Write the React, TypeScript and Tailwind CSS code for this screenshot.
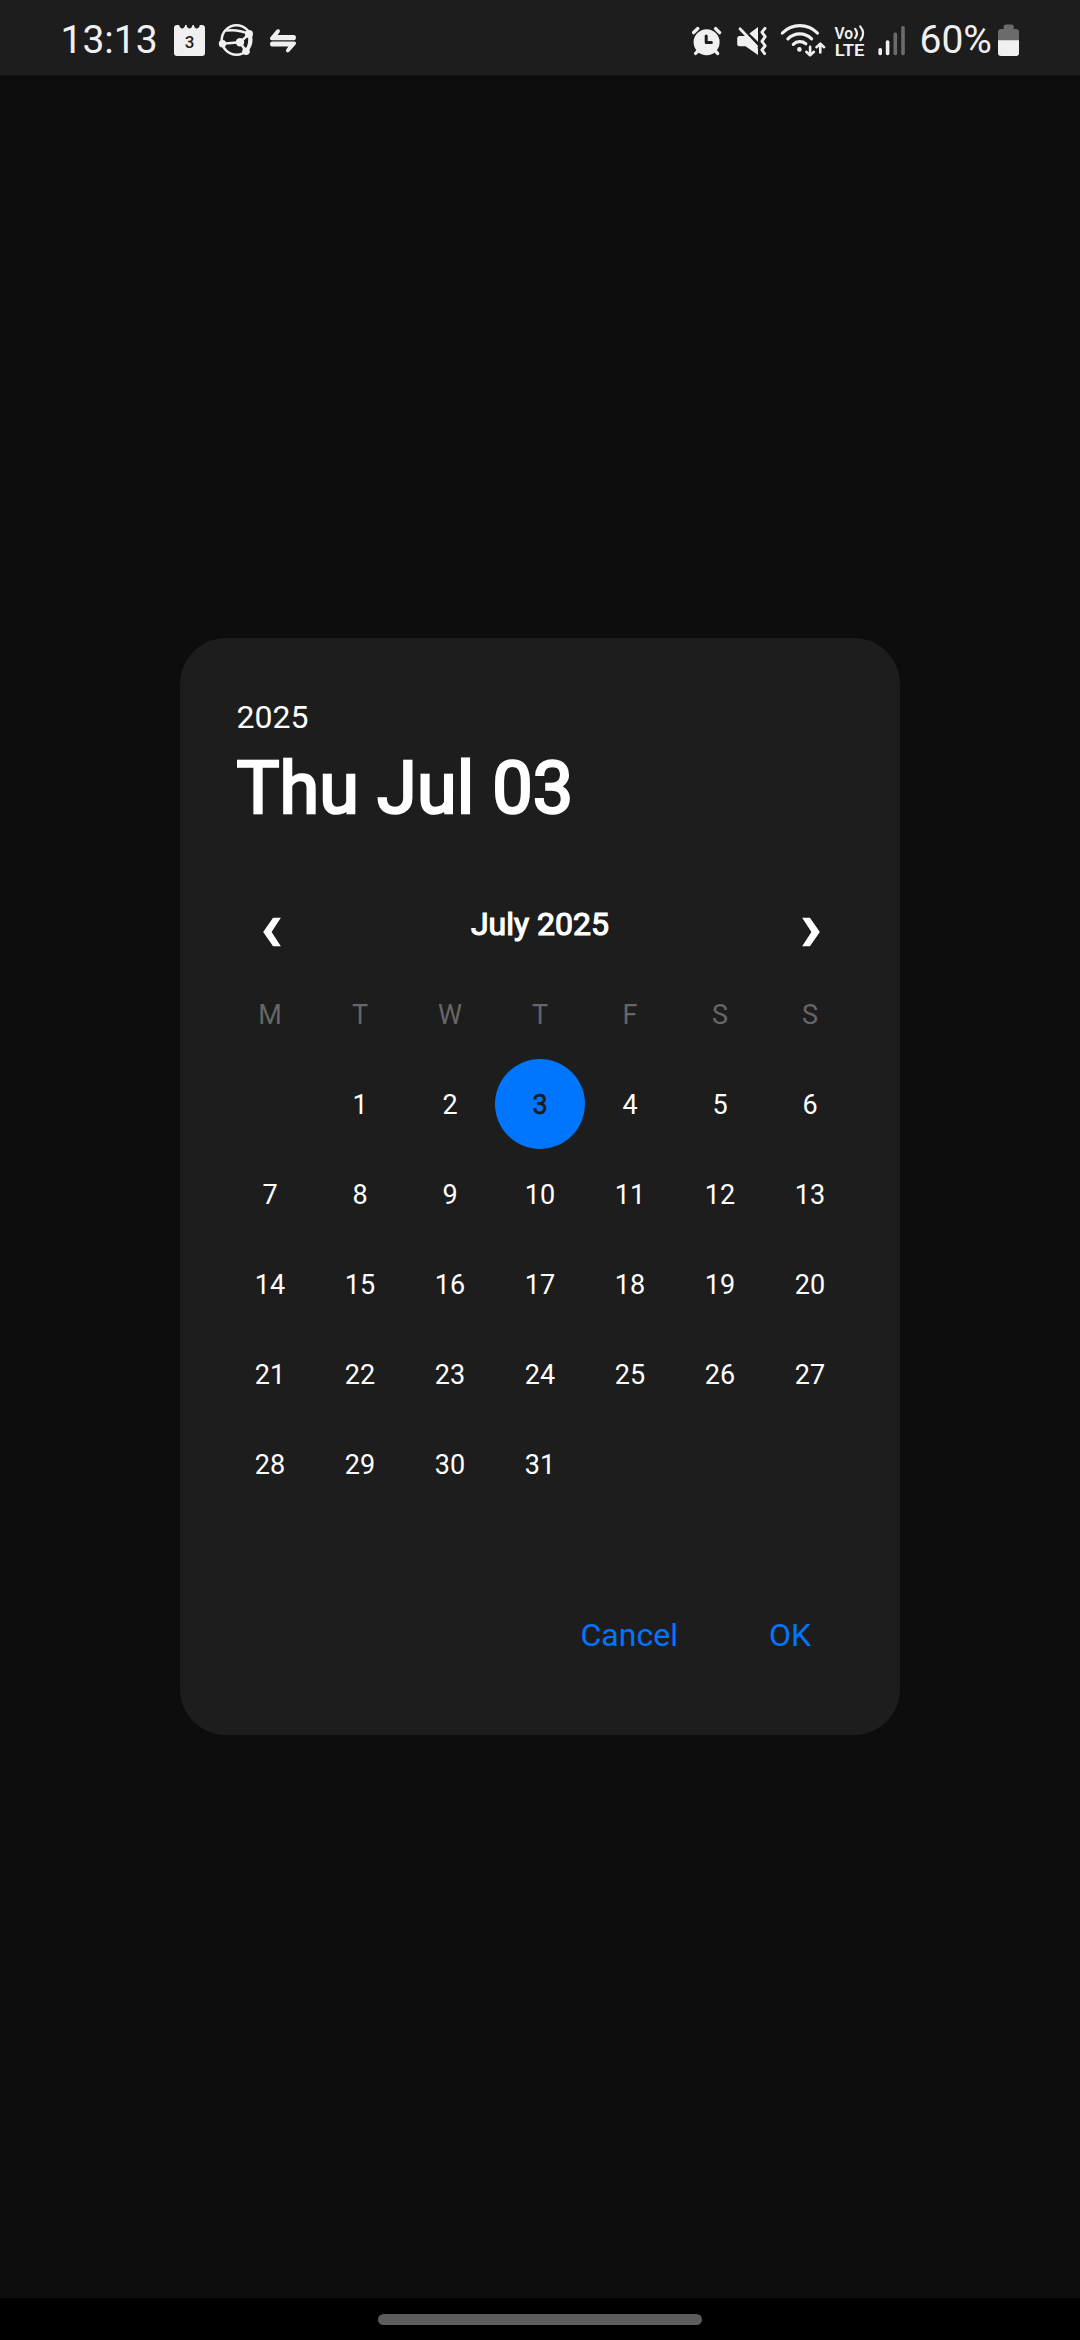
import type { ReactNode } from "react";

const WEEKDAYS = ["M", "T", "W", "T", "F", "S", "S"];
const DAYS: (number | null)[] = [null, ...Array.from({ length: 31 }, (_, i) => i + 1)];
const SELECTED = 3;

const INK = "#f0f0f0";
const BAR = "#1d1d1d";
const DIM = "#6b6b6b";

function Glyph({ x, w, className = "", children }: { x: number; w: number; className?: string; children: ReactNode }) {
  return (
    <svg viewBox={`${x} 0 ${w} 75`} width={w} height={75} className={`shrink-0 overflow-visible ${className}`} fill="none" stroke="none" strokeLinecap="round" strokeLinejoin="round">
      {children}
    </svg>
  );
}

function StatusBar() {
  return (
    <header className="flex h-[75px] shrink-0 justify-between bg-[#1d1d1d] pr-[61px] pl-[60.5px] text-[#f0f0f0]">
      <div className="flex">
        <span className="w-[98.5px] text-[39px] leading-[80px] whitespace-nowrap">13:13</span>
        <Glyph x={174} w={31} className="ml-[15px]">
          <path fill={INK} d="M177 25H179.2Q179.8 28.4 182.2 28.4T185.2 25H186.5Q187.1 28.4 189.5 28.4T192.5 25H193.8Q194.4 28.4 196.8 28.4T199.8 25H202Q205 25 205 28V53Q205 56 202 56H177Q174 56 174 53V28Q174 25 177 25Z" />
          <text x="189.5" y="48.2" fontSize="17" fontWeight="500" textAnchor="middle" fill={BAR}>3</text>
        </Glyph>
        <Glyph x={219} w={34} className="ml-[14px]">
          <g stroke={INK} strokeWidth="2.5">
            <circle cx="236.5" cy="40" r="14.8" />
            <path d="M227 30.5Q238 29 249 34L240 42.3L246 51.3M222.3 43.7L240 42.3" />
            <path d="M249 34Q251 43 246 51.3" />
          </g>
          <g fill={INK}>
            <circle cx="222.5" cy="43.7" r="3.7" />
            <circle cx="249" cy="34" r="4" />
            <circle cx="240" cy="42.3" r="4.2" />
            <circle cx="246" cy="51.3" r="3.8" />
          </g>
        </Glyph>
        <Glyph x={270} w={26} className="ml-[17px]">
          <path fill={INK} d="M270.6 37L276.6 29.8Q278 28.6 279.3 29.6T279.6 32.3L277.6 35H294Q296 35 296 37.6T294 40.2H271.5Q269 39.4 270.6 37Z" />
          <path fill={INK} d="M295.6 44.6L289.4 51.6Q288 53 286.6 51.9T286.4 49.3L288.4 46.6H272Q270 46.6 270 44T272 41.4H294.5Q297 42.2 295.6 44.6Z" />
        </Glyph>
      </div>
      <div className="flex">
        <Glyph x={692} w={29}>
          <circle cx="706.6" cy="42.2" r="13" fill={INK} />
          <path stroke={INK} strokeWidth="3.4" d="M693.6 32.6L697.8 28.6M715.6 28.6L719.6 32.6M698 51L695.6 53.4M715.3 51L717.6 53.4" />
          <path stroke={BAR} strokeWidth="3" d="M706.2 36V42.4H711.4" />
        </Glyph>
        <Glyph x={737} w={30} className="ml-[16px]">
          <path fill={INK} d="M739.5 36H746L758 48.5V55L745.5 46.3H739.5Q737.2 46.3 737.2 44V38.3Q737.2 36 739.5 36Z" />
          <path fill={INK} d="M758 27V41.8L749.4 33.6Z" />
          <path stroke={INK} strokeWidth="2.8" d="M740 28.8L756.7 46.5" />
          <path stroke={INK} strokeWidth="2.9" d="M765 28.3L761.9 32.2L765.2 36.6L761.9 41.3L765.2 45.8L761.9 50L764.6 53.6" />
        </Glyph>
        <Glyph x={781} w={44} className="ml-[14px]">
          <path stroke={INK} strokeWidth="3.2" d="M782.4 33A24.5 24.5 0 0 1 817.4 33M787.9 38.9A16.5 16.5 0 0 1 811.6 38.9M793.3 44.3A9.5 9.5 0 0 1 805.8 43.7" />
          <circle cx="799.4" cy="49.4" r="2.3" fill={INK} />
          <path stroke={INK} strokeWidth="2.6" d="M810.1 46.8V55.2M806.3 51.8L810.1 55.4L813.9 51.8M820.3 52.4V43.8M816.5 47.2L820.3 43.6L824.1 47.2" />
        </Glyph>
        <Glyph x={835} w={30} className="ml-[10px]">
          <g fill={INK} fontSize="16.7" fontWeight="600">
            <text x="834.6" y="38.6" textLength="18.6" lengthAdjust="spacingAndGlyphs">Vo</text>
            <text x="834.8" y="56" textLength="29.6" lengthAdjust="spacingAndGlyphs">LTE</text>
          </g>
          <path stroke={INK} strokeWidth="2.2" d="M855.2 28.8Q858.6 33.4 855.2 38M860.2 26.4Q866 33.4 860.4 40.2" />
        </Glyph>
        <Glyph x={878} w={27} className="ml-[13px]">
          <rect x="878.4" y="48" width="3.6" height="7.2" rx="1.6" fill={INK} />
          <rect x="885.8" y="40.2" width="3.6" height="15" rx="1.6" fill={INK} />
          <rect x="893.5" y="32.4" width="3.6" height="22.8" rx="1.6" fill={DIM} />
          <rect x="901.2" y="26" width="3.6" height="29.2" rx="1.6" fill={DIM} />
        </Glyph>
        <span className="ml-[14.5px] w-[78.5px] text-[39px] leading-[80px] whitespace-nowrap">60%</span>
        <Glyph x={998} w={21}>
          <path fill={DIM} d="M998 41V32Q998 29 1001 29H1003.7V26.5Q1003.7 24.4 1006 24.4H1011.4Q1013.7 24.4 1013.7 26.5V29H1016Q1019 29 1019 32V41Z" />
          <path fill={INK} d="M998 40.3H1019V53Q1019 56 1016 56H1001Q998 56 998 53Z" />
        </Glyph>
      </div>
    </header>
  );
}

function Chevron({ flip = false }: { flip?: boolean }) {
  return (
    <button className="flex h-[90px] w-[90px] items-center justify-center">
      <svg width="18" height="29" viewBox="0 0 18 29" className={flip ? "translate-x-px translate-y-[7.5px] -scale-x-100" : "translate-x-[2px] translate-y-[7.5px]"}>
        <path d="M10.2 0H18L8.6 14.5L18 29H10.2L0.2 14.5Z" fill="#ffffff" />
      </svg>
    </button>
  );
}

function DatePicker() {
  return (
    <section className="flex h-[1097px] w-[720px] flex-col rounded-[46px] bg-[#1d1d1d] px-[45px] pt-[59px] text-white">
      <div className="pl-[11.5px]">
        <p className="text-[32px] leading-[40px]">2025</p>
        <h1 className="mt-1 text-[72px] leading-[95px] tracking-[0.1px] [-webkit-text-stroke:2.5px_#ffffff]">Thu Jul 03</h1>
      </div>
      <div className="mt-[43px] flex items-center justify-between">
        <Chevron />
        <h2 className="text-[32px] leading-[40px] [-webkit-text-stroke:1.2px_#ffffff]">July 2025</h2>
        <Chevron flip />
      </div>
      <div className="grid grid-cols-7 text-center text-[27px] leading-[92px]">
        {WEEKDAYS.map((d, i) => (
          <span key={i} className="h-[90px] text-[#666666]">{d}</span>
        ))}
        {DAYS.map((d, i) => (
          <span key={i} className={d === SELECTED ? "h-[90px] rounded-full bg-[#0076ff] text-[#1d1d1d] [-webkit-text-stroke:0.7px_#1d1d1d]" : "h-[90px]"}>{d}</span>
        ))}
      </div>
      <div className="mt-[106px] flex justify-end gap-[91px] pr-[44px] text-[32px] leading-[40px] text-[#0076ff]">
        <button>Cancel</button>
        <button>OK</button>
      </div>
    </section>
  );
}

export default function App() {
  return (
    <div className="flex h-[2340px] w-[1080px] flex-col overflow-hidden bg-[#0d0d0d] font-['Roboto',sans-serif]">
      <StatusBar />
      <main className="flex flex-1 items-center justify-center">
        <DatePicker />
      </main>
      <footer className="flex h-[42px] shrink-0 justify-center bg-black pt-4">
        <div className="h-[11px] w-[324px] rounded-full bg-[#5d5d5d]" />
      </footer>
    </div>
  );
}
